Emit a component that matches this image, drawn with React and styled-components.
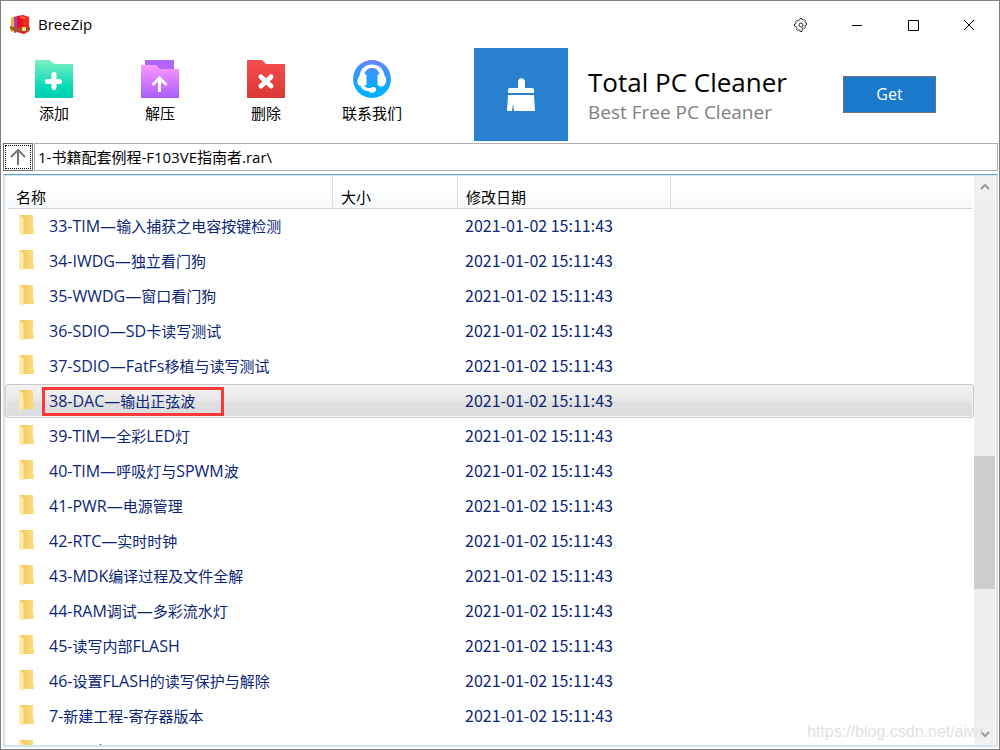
import { useState } from "react";

import styled, { createGlobalStyle } from "styled-components";

const DATE = "2021-01-02 15:11:43";

const FILES = [
  "33-TIM—输入捕获之电容按键检测",
  "34-IWDG—独立看门狗",
  "35-WWDG—窗口看门狗",
  "36-SDIO—SD卡读写测试",
  "37-SDIO—FatFs移植与读写测试",
  "38-DAC—输出正弦波",
  "39-TIM—全彩LED灯",
  "40-TIM—呼吸灯与SPWM波",
  "41-PWR—电源管理",
  "42-RTC—实时时钟",
  "43-MDK编译过程及文件全解",
  "44-RAM调试—多彩流水灯",
  "45-读写内部FLASH",
  "46-设置FLASH的读写保护与解除",
  "7-新建工程-寄存器版本",
  "8-工具文",
];

const MARKED_FILE = "38-DAC—输出正弦波";

const LogoIcon = () => (
  <svg width="20" height="20" viewBox="0 0 20 20">
    <path d="M1 3l5-2v15l-5 1z" fill="#f6b51c" />
    <path d="M4 2l4-1v16l-4 1z" fill="#a43be0" />
    <path d="M7 1l6-1 6 2v14l-5 3-7-2z" fill="#e0161b" />
    <path d="M8 2l5-1 5 2-5 1z" fill="#ff5a40" />
    <path d="M13 4l6-1v13l-5 3z" fill="#f52a22" />
    <path d="M0 11c5 2 13 3 20 1v3c-7 3-15 2-20-1z" fill="#a4571a" />
    <rect x="12" y="12" width="4" height="4" rx="1" fill="#f0d9a0" />
  </svg>
);

const AddIcon = () => (
  <svg width="38" height="38" viewBox="0 0 38 38">
    <defs>
      <linearGradient id="addFill" x1="0" y1="0" x2="0" y2="1">
        <stop offset="0" stopColor="#7eefc2" />
        <stop offset="0.75" stopColor="#00d9b8" />
        <stop offset="1" stopColor="#00cfb3" />
      </linearGradient>
    </defs>
    <path d="M0 0h15l4 4h19v34H0z" fill="url(#addFill)" />
    <path d="M19 14.500v13M12.500 21.500h12" stroke="#fff" strokeWidth="5" strokeLinecap="round" />
  </svg>
);

const ExtractIcon = () => (
  <svg width="38" height="38" viewBox="0 0 38 38">
    <defs>
      <linearGradient id="extractFill" x1="0" y1="0" x2="0" y2="1">
        <stop offset="0" stopColor="#fc98ff" />
        <stop offset="1" stopColor="#a95cff" />
      </linearGradient>
    </defs>
    <path d="M4 0h29v14H4z" fill="#b065ff" />
    <path d="M0 5h15l4 4h19v29H0z" fill="url(#extractFill)" />
    <path d="M18.500 32V18M11.500 25l7-7 7 7" fill="none" stroke="#fff" strokeWidth="3" />
  </svg>
);

const DeleteIcon = () => (
  <svg width="38" height="38" viewBox="0 0 38 38">
    <defs>
      <linearGradient id="deleteFill" x1="0" y1="0" x2="0" y2="1">
        <stop offset="0" stopColor="#f5504f" />
        <stop offset="1" stopColor="#dc3836" />
      </linearGradient>
    </defs>
    <path d="M0 0h15l4 4h19v34H0z" fill="url(#deleteFill)" />
    <path d="M14 17l10 9M24 17l-10 9" stroke="#fff" strokeWidth="5" strokeLinecap="round" />
  </svg>
);

const SupportIcon = () => (
  <svg width="38" height="38" viewBox="0 0 38 38">
    <defs>
      <linearGradient id="supportFill" gradientUnits="userSpaceOnUse" x1="0" y1="0" x2="0" y2="38">
        <stop offset="0" stopColor="#6a82fb" />
        <stop offset="0.700" stopColor="#08aaff" />
        <stop offset="1" stopColor="#00b2ff" />
      </linearGradient>
    </defs>
    <circle cx="19" cy="19" r="19" fill="url(#supportFill)" />
    <path
      d="M19 4.500C12 4.500 7.500 9 6.500 16c-3 3-3 9 1 10 1 3 4 5 8 5 2 3 8 2 7.500-2-1-3-5-2.500-6.500-1-3 0-4-1-5.500-2.500l2.500-.5V14l-1-1.500c2-3 3-4 6.500-4s4.500 1 6.500 4L24.500 14v11c2.500 2 5 2 7 0 2.500-2 2-7 0-9.500C30.500 9 26 4.500 19 4.500z"
      fill="#fff"
    />
    <path
      d="M11.500 14c1-4 4-6 7.500-6s6.500 2 7.500 6l-2.500 1v9c0 2 1 2 1 3h-5l-3 1-5-1c2-1 2-2 2-4v-8z"
      fill="url(#supportFill)"
    />
    <path d="M15 29c3 0 4-2 6-2 2.500 0 2.500 5-1 5.500-2 0-3-1-5-3.500z" fill="#fff" />
  </svg>
);

const BroomIcon = () => (
  <svg width="28" height="34" viewBox="0 0 28 34">
    <path d="M11 10V4c0-5 7-5 7 0v6h7q2 0 2 2v3H1v-3q0-2 2-2z" fill="#fff" />
    <path d="M1 17h26l1 16H7l-1-7-1 7H0z" fill="#fff" />
  </svg>
);

const GearIcon = () => (
  <svg width="14" height="14" viewBox="0 0 14 14" fill="none" stroke="#333">
    <path d="M5.800 1.700L6 .5h2l.200 1.200 1 .4 1-.7 1.400 1.400-.7 1 .4 1 1.200.2v2l-1.200.2-.4 1 .7 1-1.400 1.400-1-.7-1 .4L8 13.500H6l-.2-1.200-1-.4-1 .7-1.400-1.400.7-1-.4-1L.5 8V6l1.200-.2.4-1-.7-1 1.400-1.400 1 .7z" />
    <circle cx="7" cy="7" r="2" />
  </svg>
);

const MinimizeIcon = () => (
  <svg width="12" height="12" viewBox="0 0 12 12" stroke="#000">
    <path d="M1 6.500h10" />
  </svg>
);

const MaximizeIcon = () => (
  <svg width="12" height="12" viewBox="0 0 12 12" fill="none" stroke="#000">
    <path d="M1.500 1.500h10v10h-10z" />
  </svg>
);

const CloseIcon = () => (
  <svg width="12" height="12" viewBox="0 0 12 12" stroke="#000">
    <path d="M1 1l10 10M11 1L1 11" />
  </svg>
);

const UpIcon = () => (
  <svg width="16" height="16" viewBox="0 0 16 16" fill="none" stroke="#777" strokeWidth="2">
    <path d="M8 16V2M1 8l7-7 7 7" />
  </svg>
);

const FolderIcon = () => (
  <svg width="16" height="22" viewBox="0 0 16 22">
    <defs>
      <linearGradient id="folderFill" x1="0" y1="0" x2="1" y2="0">
        <stop offset="0.200" stopColor="#f1cb62" />
        <stop offset="1" stopColor="#ffdf85" />
      </linearGradient>
    </defs>
    <path d="M1 0h13v13l1 1v5H4z" fill="url(#folderFill)" />
    <path d="M0 0l4 3v18l-4-2z" fill="#ffeba8" />
    <path d="M4 4l1-1v15l-1 2z" fill="#f7dc86" />
  </svg>
);

const ChevronIcon = ({ down }) => (
  <svg width="10" height="8" viewBox="0 0 10 8" fill="none" stroke="#9a9a9a" strokeWidth="2">
    <path d={down ? "M1 1l4 4 4-4" : "M1 6l4-4 4 4"} />
  </svg>
);

const ACTIONS = [
  { label: "添加", Icon: AddIcon },
  { label: "解压", Icon: ExtractIcon },
  { label: "删除", Icon: DeleteIcon },
  { label: "联系我们", Icon: SupportIcon },
];

// Latin runs sit one size above the Chinese ones
const FileName = ({ text }) =>
  text
    .split(/([\x20-\x7e—]+)/)
    .filter(Boolean)
    .map((part, i) =>
      /[\x20-\x7e—]/.test(part) ? <Latin key={i}>{part}</Latin> : part
    );

const App = () => {
  const [path, setPath] = useState("1-书籍配套例程-F103VE指南者.rar\\");
  const [selected, setSelected] = useState(MARKED_FILE);

  return (
    <Window>
      <GlobalStyle />
      <TitleBar>
        <LogoIcon />
        <AppName>BreeZip</AppName>
        <CaptionButton aria-label="设置">
          <GearIcon />
        </CaptionButton>
        <CaptionButton aria-label="最小化">
          <MinimizeIcon />
        </CaptionButton>
        <CaptionButton aria-label="最大化">
          <MaximizeIcon />
        </CaptionButton>
        <CaptionButton aria-label="关闭">
          <CloseIcon />
        </CaptionButton>
      </TitleBar>

      <Toolbar>
        <Actions>
          {ACTIONS.map(({ label, Icon }) => (
            <ActionButton key={label}>
              <Icon />
              {label}
            </ActionButton>
          ))}
        </Actions>
        <Promo>
          <PromoLogo>
            <BroomIcon />
          </PromoLogo>
          <PromoText>
            <PromoTitle>Total PC Cleaner</PromoTitle>
            <PromoSubtitle>Best Free PC Cleaner</PromoSubtitle>
          </PromoText>
          <GetButton>Get</GetButton>
        </Promo>
      </Toolbar>

      <PathBar>
        <UpButton aria-label="向上">
          <UpIcon />
        </UpButton>
        <PathInput
          aria-label="路径"
          value={path}
          onChange={(e) => setPath(e.target.value)}
        />
      </PathBar>

      <Panel>
        <FileTable>
          <thead>
            <HeadRow>
              <HeadCell>名称</HeadCell>
              <HeadCell>大小</HeadCell>
              <HeadCell>修改日期</HeadCell>
            </HeadRow>
          </thead>
          <tbody>
            {FILES.map((name) => (
              <Row
                key={name}
                $selected={name === selected}
                onClick={() => setSelected(name)}
              >
                <NameCell>
                  <FolderIcon />
                  <Name>
                    <FileName text={name} />
                    {name === MARKED_FILE && <Marker />}
                  </Name>
                </NameCell>
                <Cell />
                <Cell>{DATE}</Cell>
              </Row>
            ))}
          </tbody>
        </FileTable>
        <ScrollBar>
          <ScrollButton aria-label="向上滚动">
            <ChevronIcon />
          </ScrollButton>
          <Track>
            <Thumb />
          </Track>
          <ScrollButton aria-label="向下滚动">
            <ChevronIcon down />
          </ScrollButton>
        </ScrollBar>
      </Panel>
      <Watermark>https://blog.csdn.net/aiwr</Watermark>
    </Window>
  );
};

export default App;

const GlobalStyle = createGlobalStyle`
  * {
    box-sizing: border-box;
  }

  body {
    margin: 0;
    font-family: "Open Sans", "Noto Sans CJK SC", sans-serif;
    font-size: 15px;
    color: #000;
    background: #fff;
  }

  button,
  input {
    font: inherit;
    color: inherit;
  }

  svg {
    display: block;
    flex: none;
  }
`;

const Window = styled.main`
  position: relative;
  display: flex;
  flex-direction: column;
  height: 100vh;
  padding: 0 1px 2px 2px;
  border: 1px solid #808080;
  background: #fff;
  overflow: hidden;
`;

const TitleBar = styled.header`
  display: flex;
  flex: none;
  align-items: center;
  height: 47px;
  padding: 0 1px 0 7px;
`;

const AppName = styled.span`
  flex: 1;
  padding: 0 0 2px 8px;
`;

const CaptionButton = styled.button`
  display: grid;
  place-items: center;
  width: 56px;
  height: 32px;
  padding: 0;
  border: 0;
  background: none;
`;

const Toolbar = styled.section`
  display: flex;
  flex: none;
  height: 95px;
  margin-left: -2px;
`;

const Actions = styled.div`
  display: flex;
  width: 473px;
`;

const ActionButton = styled.button`
  display: flex;
  flex-direction: column;
  align-items: center;
  gap: 3px;
  width: 106px;
  padding: 12px 0 0;
  border: 0;
  line-height: 24px;
  background: none;
`;

const Promo = styled.div`
  display: flex;
  flex: 1;
  align-items: flex-start;
`;

const PromoLogo = styled.div`
  display: grid;
  place-items: center;
  width: 94px;
  height: 93px;
  background: #2980ce;
`;

const PromoText = styled.div`
  flex: 1;
  padding: 17px 0 0 20px;
`;

const PromoTitle = styled.div`
  font-size: 26px;
  line-height: 34px;
`;

const PromoSubtitle = styled.div`
  font-size: 19px;
  line-height: 26px;
  color: #808080;
`;

const GetButton = styled.button`
  width: 93px;
  height: 37px;
  margin: 28px 62px 0 0;
  padding: 0 0 2px;
  border: 1px solid #6f7276;
  font-size: 16px;
  color: #fff;
  background: #1979ca;
`;

const PathBar = styled.div`
  display: flex;
  flex: none;
  height: 28px;
`;

const UpButton = styled.button`
  display: grid;
  place-items: center;
  width: 30px;
  padding: 0;
  border: 1px solid #707070;
  outline: 1px dotted #000;
  outline-offset: -3px;
  background: #fff;
`;

const PathInput = styled.input`
  flex: 1;
  min-width: 0;
  margin-left: 1px;
  padding: 0 3px 2px;
  border: 1px solid #abadb3;
  outline: 0;
`;

const Panel = styled.section`
  display: flex;
  flex: 1;
  min-height: 0;
  margin-top: 3px;
  padding: 1px;
  border: 1px solid #d0e0ea;
  border-top-color: #569dc0;
  box-shadow: inset 0 0 0 1px #d9e6ee;
  overflow: hidden;
`;

const columns = "325px 125px 213px 1fr";

const FileTable = styled.table`
  display: block;
  flex: 1;
  border-collapse: collapse;
  overflow: hidden;

  thead,
  tbody {
    display: block;
  }
`;

const HeadRow = styled.tr`
  display: grid;
  grid-template-columns: ${columns};
  height: 33px;
  margin: 0 2px 0 3px;
  border-bottom: 1px solid #d5d5d5;
  background: linear-gradient(#fff 40%, #f7f8fa);
`;

const HeadCell = styled.th`
  padding: 9px 8px 0;
  border-right: 1px solid #dedfe1;
  font-weight: 400;
  line-height: 24px;
  text-align: left;
`;

const Row = styled.tr`
  display: grid;
  grid-template-columns: ${columns};
  align-items: center;
  height: 34px;
  margin-bottom: 1px;
  padding-left: 2px;
  border: 1px solid ${(p) => (p.$selected ? "#c9c9c9" : "transparent")};
  border-radius: 3px;
  color: #0c2577;
  background: ${(p) =>
    p.$selected
      ? "linear-gradient(#f2f2f2, #e9e9e9 48%, #e0e0e0 52%, #dcdcdc)"
      : "none"};
  box-shadow: ${(p) => (p.$selected ? "inset 0 0 0 1px #f3f3f3" : "none")};
`;

const Cell = styled.td`
  padding: 0 8px 2px 7px;
  font-family: "Noto Sans CJK SC", sans-serif;
  font-size: 16px;
  line-height: 24px;
  white-space: nowrap;
`;

const NameCell = styled.td`
  display: flex;
  align-items: center;
  gap: 14px;
  padding: 0 0 0 11px;
  line-height: 24px;
  white-space: nowrap;
`;

const Name = styled.span`
  position: relative;
`;

const Latin = styled.span`
  font-size: 16px;
`;

const Marker = styled.span`
  position: absolute;
  inset: -2px -29px -3px -7px;
  border: 3px solid #f93a3a;
`;

const ScrollBar = styled.div`
  display: flex;
  flex: none;
  flex-direction: column;
  width: 21px;
  margin-right: 1px;
  background: #efefef;
`;

const ScrollButton = styled.button`
  display: grid;
  place-items: center;
  height: 21px;
  padding: 0;
  border: 0;
  background: #f1f1f1;
`;

const Track = styled.div`
  display: grid;
  flex: 1;
  grid-template-rows: 259fr 134fr 135fr;
`;

const Thumb = styled.div`
  grid-row: 2;
  background: #cdcdcd;
`;

const Watermark = styled.div`
  position: absolute;
  right: 15px;
  bottom: 6px;
  font-family: "Liberation Sans", sans-serif;
  font-size: 16px;
  line-height: 22px;
  color: #e2e2e2;
  pointer-events: none;
`;
